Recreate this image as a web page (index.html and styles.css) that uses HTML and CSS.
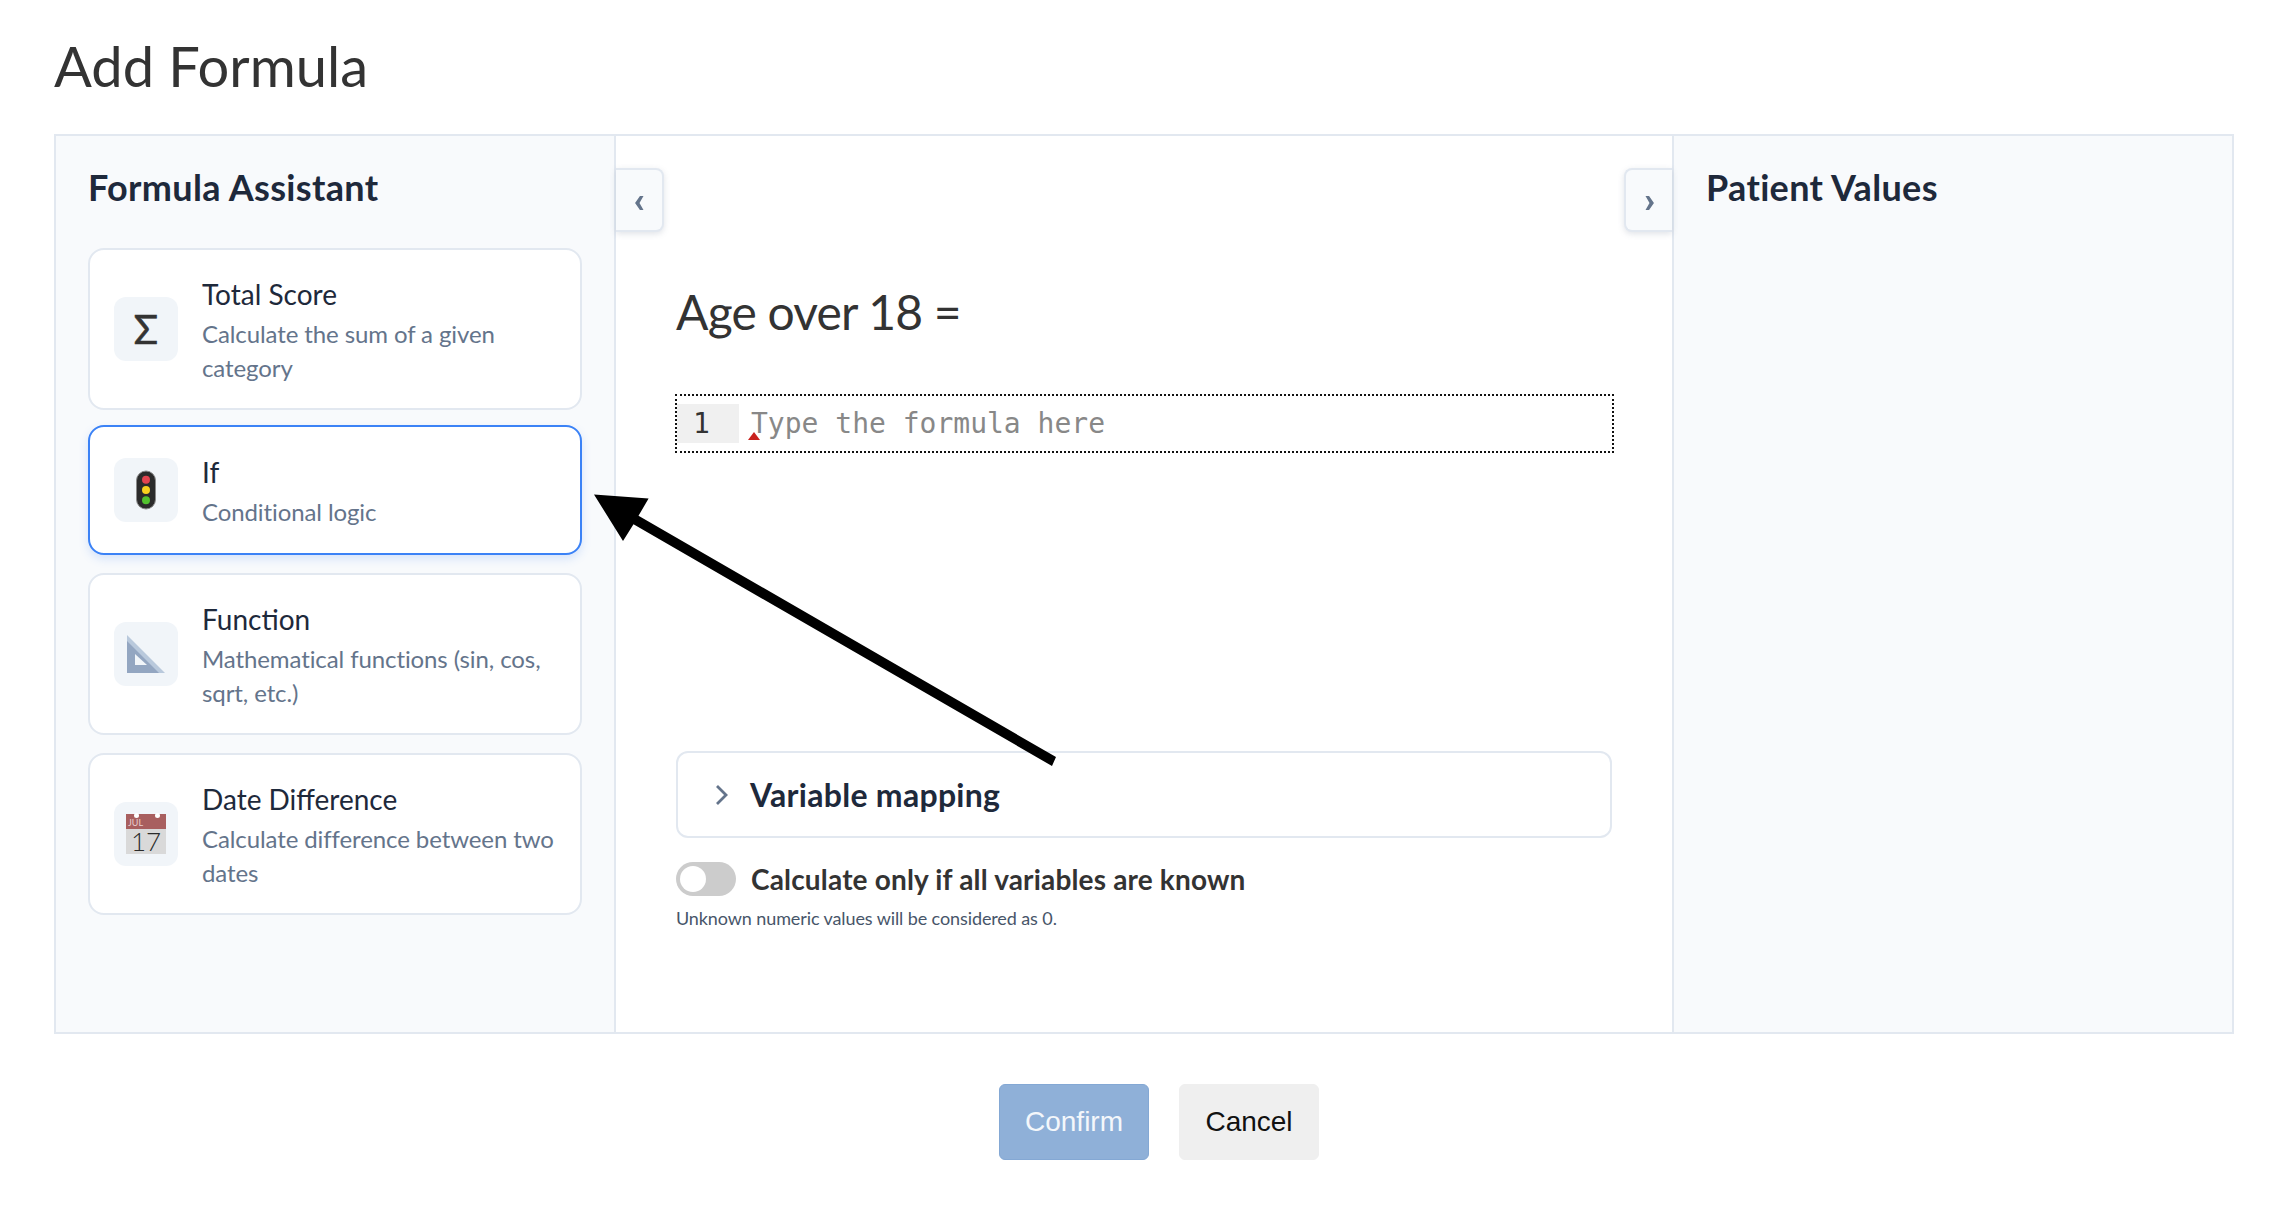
FILE: index.html
```html
<!DOCTYPE html>
<html lang="en">
<head>
<meta charset="utf-8">
<title>Add Formula</title>
<link rel="stylesheet" href="styles.css">
</head>
<body>
<div class="page">
  <h1 class="title">Add Formula</h1>
  <div class="shell">
    <aside class="panel">
      <h2 class="panel-title">Formula Assistant</h2>
      <div class="cards">
        <div class="card">
          <div class="icon"><span class="sigma">Σ</span></div>
          <div class="card-text"><div class="card-name">Total Score</div><div class="card-desc">Calculate the sum of a given category</div></div>
        </div>
        <div class="card selected">
          <div class="icon">
            <svg class="glyph" viewBox="0 0 40 40"><rect x="10.5" y="1" width="19" height="38" rx="9.5" fill="#2b2b2b" stroke="#8a8a8a" stroke-width="1"/><circle cx="20" cy="9.7" r="4" fill="#e2434f"/><circle cx="20" cy="20" r="4" fill="#f7d11e"/><circle cx="20" cy="30.3" r="4" fill="#52c22e"/></svg>
          </div>
          <div class="card-text"><div class="card-name">If</div><div class="card-desc">Conditional logic</div></div>
        </div>
        <div class="card">
          <div class="icon">
            <svg class="glyph" viewBox="0 0 40 40"><path d="M1 1V39H39Z" fill="#b9c9dc"/><path d="M1 7V39H33Z" fill="#93a6c1"/><path d="M9 20V31H21Z" fill="#f1f5f9"/></svg>
          </div>
          <div class="card-text"><div class="card-name">Function</div><div class="card-desc">Mathematical functions (sin, cos, sqrt, etc.)</div></div>
        </div>
        <div class="card">
          <div class="icon">
            <div class="cal">
              <div class="cal-top"><span class="cal-month">JUL</span><span class="ring ring-a"></span><span class="ring ring-b"></span></div>
              <div class="cal-day">17</div>
            </div>
          </div>
          <div class="card-text"><div class="card-name">Date Difference</div><div class="card-desc">Calculate difference between two dates</div></div>
        </div>
      </div>
    </aside>
    <main class="center">
      <button class="tab tab-left"><svg viewBox="0 0 12 18" class="tab-ico"><path d="M10.5 1 6 9 10.5 17H6.5L1 9 6.5 1Z"/></svg></button>
      <button class="tab tab-right"><svg viewBox="0 0 12 18" class="tab-ico"><path d="M1.5 1 6 9 1.5 17H5.5L11 9 5.5 1Z"/></svg></button>
      <div class="formula-name">Age over 18 =</div>
      <div class="editor">
        <div class="gutter"><span class="line-no">1</span></div>
        <div class="code">Type the formula here<span class="err"></span></div>
      </div>
      <div class="mapping">
        <svg class="map-chev" viewBox="0 0 16 24"><path d="M3 3 12 12 3 21" fill="none" stroke="#64748b" stroke-width="2.8"/></svg>
        <span class="map-label">Variable mapping</span>
      </div>
      <div class="toggle-row">
        <span class="toggle"><span class="knob"></span></span>
        <span class="toggle-label">Calculate only if all variables are known</span>
      </div>
      <div class="hint">Unknown numeric values will be considered as 0.</div>
    </main>
    <aside class="panel panel-right">
      <h2 class="panel-title">Patient Values</h2>
    </aside>
  </div>
  <div class="actions">
    <button class="btn btn-confirm">Confirm</button>
    <button class="btn btn-cancel">Cancel</button>
  </div>
  <svg class="arrow" viewBox="0 0 2280 1210" width="2280" height="1210"><polygon points="594,494.5 648.6,498.6 638.5,515.7 1056,757 1052,766 633.5,524.3 623,541"/></svg>
</div>
</body>
</html>
```
FILE: styles.css
```css
* { box-sizing: border-box; }
html, body { margin: 0; padding: 0; background: #fff; }
body { font-family: "Lato", sans-serif; color: #333; }
.page { position: relative; width: 2280px; height: 1210px; overflow: hidden; padding-left: 54px; }
.title { margin: 0; height: 134px; padding-top: 32px; font-size: 56px; line-height: 68px; font-weight: 400; color: #333; }
.shell { display: grid; grid-template-columns: 560px minmax(0, 1fr) 560px; width: 2180px; height: 900px; border: 2px solid #e2e8f0; }
.panel { background: #f8fafc; padding: 28px 32px 0 32px; border-right: 2px solid #e2e8f0; }
.panel-right { border-right: 0; border-left: 2px solid #e2e8f0; }
.panel-title { margin: 0 0 38px; font-size: 36px; line-height: 46px; font-weight: 700; letter-spacing: .33px; color: #1e293b; }
.cards { display: flex; flex-direction: column; gap: 18px; }
.card { display: flex; align-items: center; gap: 24px; padding: 24px; background: #fff; border: 2px solid #e2e8f0; border-radius: 16px; }
.selected { margin-top: -3px; min-height: 130px; border-color: #3b82f6; box-shadow: 0 4px 10px rgba(59,130,246,.18); }
.icon { flex: none; width: 64px; height: 64px; display: flex; align-items: center; justify-content: center; background: #f1f5f9; border-radius: 12px; }
.sigma { font-size: 40px; line-height: 1; color: #333; -webkit-text-stroke: .6px #333; }
.glyph { width: 40px; height: 40px; display: block; }
.card-name { font-size: 28px; line-height: 40px; color: #1e293b; }
.card-desc { margin-top: 3px; font-size: 24px; line-height: 33.5px; letter-spacing: -.1px; color: #64748b; }
.cal { width: 40px; height: 40px; display: flex; flex-direction: column; background: #d9d9d9; }
.cal-top { position: relative; height: 15px; background: #a85f5f; }
.cal-month { display: block; padding: 3px 0 0 2px; font-size: 9px; line-height: 12px; color: #e8cfcf; }
.ring { position: absolute; top: -1px; width: 5px; height: 5px; border-radius: 50%; background: #fff; }
.ring-a { left: 8px; }
.ring-b { left: 29px; }
.cal-day { font-size: 26px; line-height: 24px; font-weight: 300; text-align: center; color: #2b2b2b; }
.center { position: relative; min-width: 0; padding: 0 56px 0 60px; background: #fff; }
.tab { position: absolute; top: 32px; width: 48px; height: 64px; padding: 6px 0 0; display: flex; align-items: center; justify-content: center; background: #f8fafc; border: 2px solid #e2e8f0; box-shadow: 0 2px 6px rgba(100,116,139,.2); }
.tab-left { left: 0; border-left: 0; border-radius: 0 8px 8px 0; }
.tab-right { right: 0; border-right: 0; border-radius: 8px 0 0 8px; }
.tab-ico { width: 11px; height: 16px; fill: #64748b; }
.formula-name { margin-top: 146px; font-size: 48px; line-height: 60px; letter-spacing: -.8px; color: #333; }
.editor { display: flex; margin: 52px 0 0 -1px; height: 59px; width: 939px; border: 2px dotted #111; }
.gutter { flex: none; width: 62px; height: 39px; margin-top: 8px; background: #f0f0f0; text-align: center; font-family: "DejaVu Sans Mono", monospace; font-size: 28px; line-height: 39px; color: #333; }
.line-no { display: block; padding-right: 13px; }
.code { position: relative; flex: 1; padding: 8px 0 0 12px; font-family: "DejaVu Sans Mono", monospace; font-size: 28px; line-height: 39px; color: #888; }
.err { position: absolute; left: 9px; top: 36px; width: 0; height: 0; border-left: 6px solid transparent; border-right: 6px solid transparent; border-bottom: 8px solid #c9221d; }
.mapping { display: flex; align-items: center; margin-top: 298px; height: 87px; width: 936px; padding-left: 36px; border: 2px solid #e2e8f0; border-radius: 12px; background: #fff; }
.map-chev { width: 16px; height: 24px; margin-right: 20px; }
.map-label { font-size: 32px; font-weight: 700; letter-spacing: .28px; color: #1e293b; }
.toggle-row { display: flex; align-items: center; gap: 15px; margin-top: 23px; }
.toggle { flex: none; display: block; position: relative; width: 60px; height: 34px; border-radius: 17px; background: #ccc; }
.knob { position: absolute; left: 4px; top: 4px; width: 26px; height: 26px; border-radius: 50%; background: #fff; }
.toggle-label { position: relative; top: 1px; font-size: 28px; line-height: 35px; font-weight: 700; letter-spacing: .17px; color: #333; }
.hint { margin-top: 10px; font-size: 18px; line-height: 24px; letter-spacing: -.1px; color: #475569; }
.actions { display: flex; gap: 30px; margin-top: 50px; padding-left: 945px; }
.btn { height: 76px; padding: 0; font-family: "Liberation Sans", sans-serif; font-size: 28px; border-radius: 6px; }
.btn-confirm { width: 150px; color: #f4f7fb; background: #8fb0d8; border: 1px solid #84a8d4; }
.btn-cancel { width: 140px; color: #111; background: #efefef; border: 1px solid #efefef; }
.arrow { position: absolute; left: 0; top: 0; fill: #000; pointer-events: none; }
```
